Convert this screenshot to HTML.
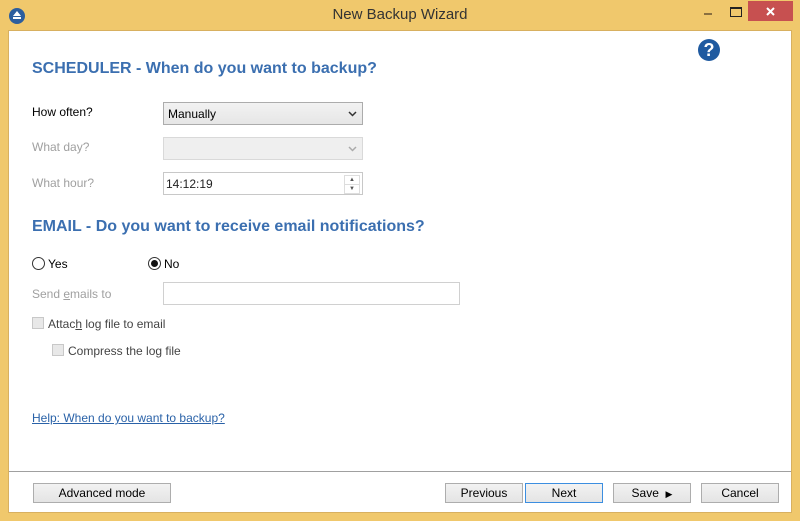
<!DOCTYPE html>
<html><head><style>
body{margin:0;width:800px;height:521px;background:#f0c86c;font-family:"Liberation Sans",sans-serif;font-size:12px;color:#000;position:relative;overflow:hidden}
.a{position:absolute}
.client{left:8px;top:30px;width:784px;height:483px;background:#fff;border:1px solid #d8b060;box-sizing:border-box}
h2{position:absolute;margin:0;font-size:16px;font-weight:bold;color:#3b6fb0;white-space:nowrap}
.lbl{color:#000}
.dis{color:#a0a0a0}
.box{border:1px solid #c8c8c8;box-sizing:border-box;background:#fff}
.btn{position:absolute;height:20px;border:1px solid #adadad;background:linear-gradient(#f2f2f2,#e4e4e4);box-sizing:border-box;text-align:center;line-height:18px;font-size:12px}
.cb{width:12px;height:12px;border:1px solid #c8c8c8;background:#e8e8e8;box-sizing:border-box}
</style></head><body>
<div class="a" style="left:9px;top:8px;width:16px;height:16px;border-radius:50%;background:#2c5e9e"></div>
<div class="a" style="left:13px;top:11px;width:0;height:0;border-left:4px solid transparent;border-right:4px solid transparent;border-bottom:5px solid #fff"></div>
<div class="a" style="left:13px;top:17px;width:8px;height:2px;background:#fff"></div>
<div class="a" style="left:0;top:6px;width:800px;text-align:center;font-size:15px;color:#333">New Backup Wizard</div>
<div class="a" style="left:704px;top:13px;width:8px;height:2px;background:#8a7040"></div>
<div class="a" style="left:730px;top:7px;width:10px;height:7px;border:1px solid #222;border-top-width:2px"></div>
<div class="a" style="left:748px;top:1px;width:45px;height:20px;background:#c75050"></div>
<svg class="a" style="left:766px;top:7px" width="9" height="9"><path d="M1 1L8 8M8 1L1 8" stroke="#fff" stroke-width="2"/></svg>
<div class="a client"></div>
<div class="a" style="left:698px;top:39px;width:22px;height:22px;border-radius:50%;background:#1f5aa0;color:#fff;font-weight:bold;font-size:18px;text-align:center;line-height:22px">?</div>
<h2 style="left:32px;top:60px">SCHEDULER - When do you want to backup?</h2>
<div class="a lbl" style="left:32px;top:105px">How often?</div>
<div class="a box" style="left:163px;top:102px;width:200px;height:23px;border-color:#acacac;background:linear-gradient(#f2f2f2,#e6e6e6);padding:4px 4px;font-size:12px">Manually<svg class="a" style="right:5px;top:8px" width="9" height="6"><path d="M1 1L4.5 4.5L8 1" stroke="#333" stroke-width="1.5" fill="none"/></svg></div>
<div class="a dis" style="left:32px;top:140px">What day?</div>
<div class="a box" style="left:163px;top:137px;width:200px;height:23px;background:#efefef;border-color:#d9d9d9"><svg class="a" style="right:5px;top:8px" width="9" height="6"><path d="M1 1L4.5 4.5L8 1" stroke="#aaa" stroke-width="1.5" fill="none"/></svg></div>
<div class="a dis" style="left:32px;top:176px">What hour?</div>
<div class="a box" style="left:163px;top:172px;width:200px;height:23px;padding:4px 2px;color:#222">14:12:19
<div class="a" style="right:2px;top:2px;width:14px;height:8px;border:1px solid #ddd;font-size:6px;text-align:center;line-height:8px;color:#555">▲</div>
<div class="a" style="right:2px;top:11px;width:14px;height:8px;border:1px solid #ddd;font-size:6px;text-align:center;line-height:8px;color:#555">▼</div></div>
<h2 style="left:32px;top:218px">EMAIL - Do you want to receive email notifications?</h2>
<div class="a" style="left:32px;top:257px;width:13px;height:13px;border:1px solid #333;border-radius:50%;box-sizing:border-box"></div>
<div class="a" style="left:48px;top:257px">Yes</div>
<div class="a" style="left:148px;top:257px;width:13px;height:13px;border:1px solid #333;border-radius:50%;box-sizing:border-box"><div style="margin:2px;width:7px;height:7px;border-radius:50%;background:#111"></div></div>
<div class="a" style="left:164px;top:257px">No</div>
<div class="a dis" style="left:32px;top:287px">Send <u>e</u>mails to</div>
<div class="a box" style="left:163px;top:282px;width:297px;height:23px;border-color:#d0d0d0"></div>
<div class="a cb" style="left:32px;top:317px"></div>
<div class="a" style="left:48px;top:317px;color:#444">Attac<u>h</u> log file to email</div>
<div class="a cb" style="left:52px;top:344px"></div>
<div class="a" style="left:68px;top:344px;color:#444">Compress the log file</div>
<div class="a" style="left:32px;top:411px;color:#2a62a8;text-decoration:underline">Help: When do you want to backup?</div>
<div class="a" style="left:9px;top:471px;width:782px;height:1px;background:#a0a0a0"></div>
<div class="btn" style="left:33px;top:483px;width:138px">Advanced mode</div>
<div class="btn" style="left:445px;top:483px;width:78px">Previous</div>
<div class="btn" style="left:525px;top:483px;width:78px;border-color:#3c8ee0">Next</div>
<div class="btn" style="left:613px;top:483px;width:78px">Save &nbsp;<span style="font-size:9px">▶</span></div>
<div class="btn" style="left:701px;top:483px;width:78px">Cancel</div>
</body></html>
